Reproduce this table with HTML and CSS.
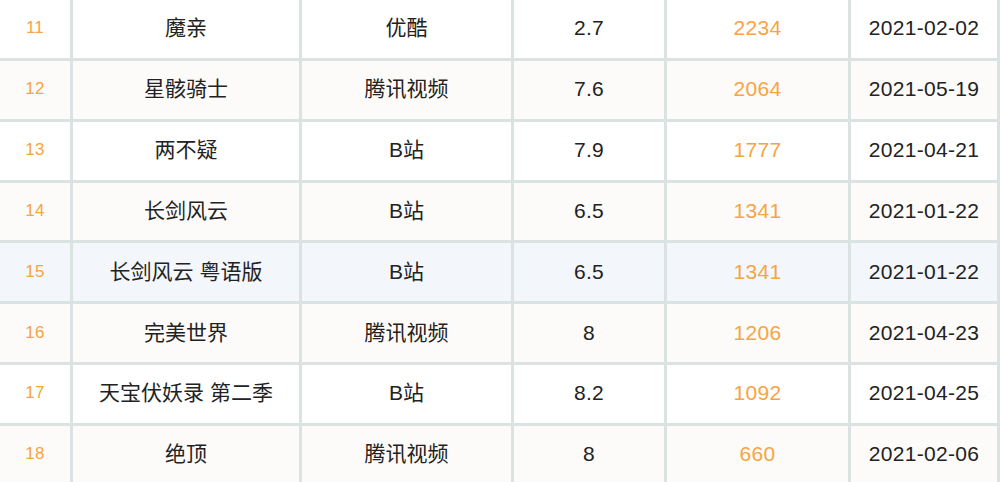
FILE: index.html
```html
<!DOCTYPE html>
<html lang="zh-CN">
<head>
<meta charset="utf-8">
<title>榜单</title>
<link rel="stylesheet" href="styles.css">
</head>
<body>
<table class="rank-table">
  <colgroup>
    <col class="c-rank"><col class="c-title"><col class="c-platform"><col class="c-score"><col class="c-heat"><col class="c-date">
  </colgroup>
  <tbody>
    <tr class="odd"><td class="rank">11</td><td>魔亲</td><td>优酷</td><td class="num">2.7</td><td class="num heat">2234</td><td class="num">2021-02-02</td></tr>
    <tr class="even"><td class="rank">12</td><td>星骸骑士</td><td>腾讯视频</td><td class="num">7.6</td><td class="num heat">2064</td><td class="num">2021-05-19</td></tr>
    <tr class="odd"><td class="rank">13</td><td>两不疑</td><td>B站</td><td class="num">7.9</td><td class="num heat">1777</td><td class="num">2021-04-21</td></tr>
    <tr class="even"><td class="rank">14</td><td>长剑风云</td><td>B站</td><td class="num">6.5</td><td class="num heat">1341</td><td class="num">2021-01-22</td></tr>
    <tr class="hover"><td class="rank">15</td><td>长剑风云 粤语版</td><td>B站</td><td class="num">6.5</td><td class="num heat">1341</td><td class="num">2021-01-22</td></tr>
    <tr class="even"><td class="rank">16</td><td>完美世界</td><td>腾讯视频</td><td class="num">8</td><td class="num heat">1206</td><td class="num">2021-04-23</td></tr>
    <tr class="odd"><td class="rank">17</td><td>天宝伏妖录 第二季</td><td>B站</td><td class="num">8.2</td><td class="num heat">1092</td><td class="num">2021-04-25</td></tr>
    <tr class="even"><td class="rank">18</td><td>绝顶</td><td>腾讯视频</td><td class="num">8</td><td class="num heat">660</td><td class="num">2021-02-06</td></tr>
  </tbody>
</table>
</body>
</html>
```

FILE: styles.css
```css
html, body {
  margin: 0;
  padding: 0;
  background: #ffffff;
  overflow: hidden;
}

.rank-table {
  width: 1000px;
  table-layout: fixed;
  border-collapse: separate;
  border-spacing: 0;
  font-family: "Liberation Sans", "Noto Sans CJK SC", sans-serif;
  font-size: 21px;
  line-height: 24px;
  color: #222222;
}

.c-rank { width: 73px; }
.c-title { width: 229px; }
.c-platform { width: 212px; }
.c-score { width: 153px; }
.c-heat { width: 184px; }
.c-date { width: 149px; }

.rank-table tr {
  height: 60.85px;
}

.rank-table td {
  padding: 0 0 1px 0;
  text-align: center;
  vertical-align: middle;
  border-right: 3px solid #dbe3e2;
  border-bottom: 3px solid #dbe3e2;
  white-space: nowrap;
  overflow: hidden;
}

.odd { background: #ffffff; }
.even { background: #fcfbf9; }
.hover { background: #f3f6fb; }

.num {
  letter-spacing: 0.3px;
}

.rank {
  font-size: 17px;
  color: #f7a442;
  letter-spacing: 0.2px;
}

.heat {
  color: #f7a442;
}
```
